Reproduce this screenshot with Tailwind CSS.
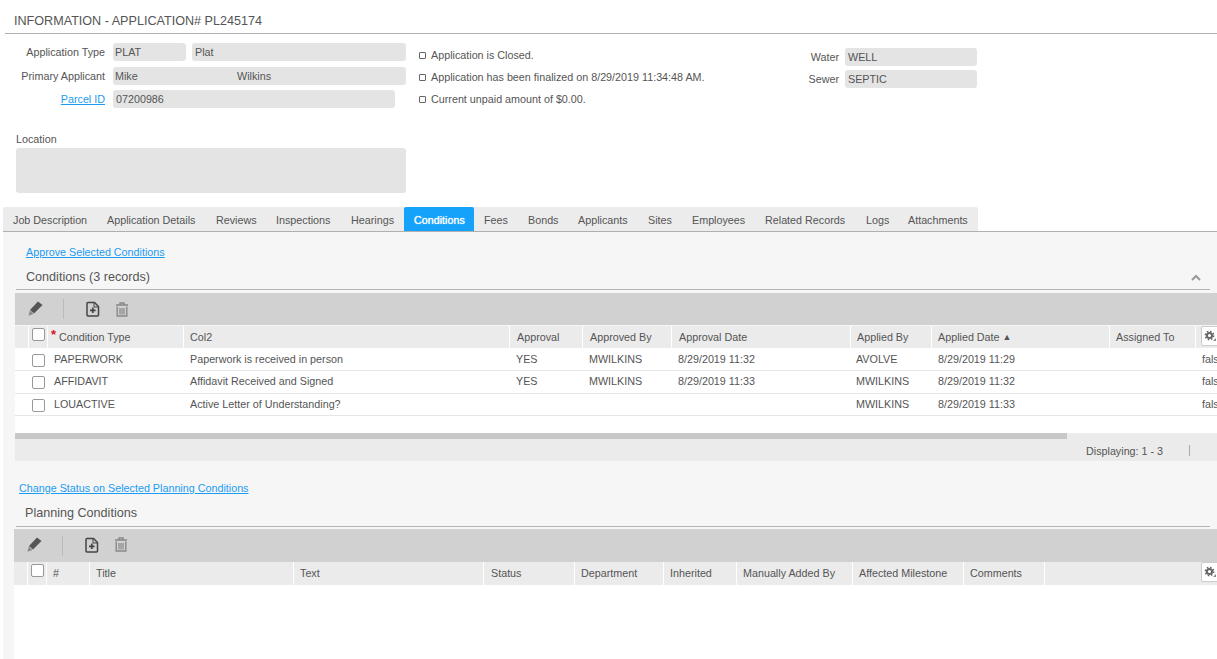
<!DOCTYPE html>
<html>
<head>
<meta charset="utf-8">
<script src="https://cdn.jsdelivr.net/npm/@tailwindcss/browser@4"></script>
</head>
<body class="bg-white h-[659px] w-[1217px] overflow-hidden font-['Liberation_Sans',Arial,sans-serif] text-[10.75px] text-[#555]">
<div class="h-[34px] ml-[5px] pl-[9px] pt-[14px] border-b border-[#b0b0b0] text-[12.6px] leading-[15px]">INFORMATION - APPLICATION# PL245174</div>

<div class="flex h-[173px]">
  <div class="w-[419px] shrink-0">
    <div class="flex mt-[9px] h-[18px] items-center">
      <div class="w-[105px] text-right">Application Type</div>
      <div class="ml-[8px] w-[73px] h-full bg-[#e4e4e4] rounded-[3px] pl-[2px] leading-[18px]">PLAT</div>
      <div class="ml-[6px] w-[214px] h-full bg-[#e4e4e4] rounded-[3px] pl-[3px] leading-[18px]">Plat</div>
    </div>
    <div class="flex mt-[6px] h-[18px] items-center">
      <div class="w-[105px] text-right">Primary Applicant</div>
      <div class="ml-[8px] w-[293px] h-full bg-[#e4e4e4] rounded-[3px] pl-[2px] leading-[18px] flex"><span class="w-[122px]">Mike</span><span>Wilkins</span></div>
    </div>
    <div class="flex mt-[5px] h-[18px] items-center">
      <a class="w-[105px] text-right text-[#1b9cf2] underline">Parcel ID</a>
      <div class="ml-[8px] w-[282px] h-full bg-[#e4e4e4] rounded-[3px] pl-[3px] leading-[18px]">07200986</div>
    </div>
    <div class="ml-[16px] mt-[25px] leading-[13px]">Location</div>
    <div class="ml-[16px] mt-[2px] w-[390px] h-[45px] bg-[#e4e4e4] rounded-[3px]"></div>
  </div>
  <div class="w-[374px] shrink-0 pt-[14px]">
    <div class="flex items-center h-[14px] gap-[5px]"><span class="w-[7px] h-[7px] border border-[#666] rounded-[1px]"></span><span>Application is Closed.</span></div>
    <div class="flex items-center h-[14px] gap-[5px] mt-[8px]"><span class="w-[7px] h-[7px] border border-[#666] rounded-[1px]"></span><span>Application has been finalized on 8/29/2019 11:34:48 AM.</span></div>
    <div class="flex items-center h-[14px] gap-[5px] mt-[8px]"><span class="w-[7px] h-[7px] border border-[#666] rounded-[1px]"></span><span>Current unpaid amount of $0.00.</span></div>
  </div>
  <div class="pt-[14px]">
    <div class="flex h-[18px] items-center">
      <div class="w-[46px] text-right">Water</div>
      <div class="ml-[6px] w-[132px] h-full bg-[#e4e4e4] rounded-[3px] pl-[3px] leading-[18px]">WELL</div>
    </div>
    <div class="flex h-[18px] items-center mt-[4px]">
      <div class="w-[46px] text-right">Sewer</div>
      <div class="ml-[6px] w-[132px] h-full bg-[#e4e4e4] rounded-[3px] pl-[3px] leading-[18px]">SEPTIC</div>
    </div>
  </div>
</div>

<div class="ml-[3px] flex h-[25px] border-b border-[#b0b0b0] leading-[26px] whitespace-nowrap">
  <div class="flex h-[24px] bg-[#ececec] rounded-t-[2px]">
    <div class="w-[94px] pl-[10px]">Job Description</div>
    <div class="w-[109px] pl-[10px]">Application Details</div>
    <div class="w-[60px] pl-[10px]">Reviews</div>
    <div class="w-[75px] pl-[10px]">Inspections</div>
    <div class="w-[63px] pl-[10px]">Hearings</div>
    <div class="w-[70px] pl-[10px] bg-[#14a2fb] text-white rounded-t-[2px] [text-shadow:0_0_1px_#fff]">Conditions</div>
    <div class="w-[44px] pl-[10px]">Fees</div>
    <div class="w-[50px] pl-[10px]">Bonds</div>
    <div class="w-[70px] pl-[10px]">Applicants</div>
    <div class="w-[44px] pl-[10px]">Sites</div>
    <div class="w-[73px] pl-[10px]">Employees</div>
    <div class="w-[101px] pl-[10px]">Related Records</div>
    <div class="w-[42px] pl-[10px]">Logs</div>
    <div class="w-[80px] pl-[10px]">Attachments</div>
  </div>
</div>

<div class="ml-[3px] h-[427px] bg-[#f6f6f6]">
  <div class="pl-[23px] pt-[14px] leading-[13px]"><a class="text-[#1b9cf2] underline">Approve Selected Conditions</a></div>
  <div class="ml-[13px] mr-[7px] mt-[7px] h-[24px] border-b border-[#b5b5b5] flex justify-between items-center pl-[10px] pr-[9px] text-[12.6px]">
    <span>Conditions (3 records)</span>
    <svg width="10" height="7" viewBox="0 0 10 7"><path d="M1 6 L5 2 L9 6" fill="none" stroke="#999" stroke-width="2"/></svg>
  </div>

  <div class="ml-[12px] mt-[3px] h-[32px] bg-[#d1d1d1] flex items-center">
    <svg class="ml-[13px] mb-[2px]" width="15" height="15" viewBox="0 0 15 15"><path d="M10 .5 L14.5 4 L6 12.5 L2 9 Z" fill="#555"/><path d="M1.8 9.6 L5.4 12.9 L.5 14.8 Z" fill="#8a8a8a"/></svg>
    <div class="ml-[20px] w-px h-[20px] bg-[#bbb]"></div>
    <svg class="ml-[22px]" width="14" height="16" viewBox="0 0 14 16"><path d="M2 1.5 H8.5 L12.5 5.5 V14 Q12.5 15 11.5 15 H2 Q1 15 1 14 V2.5 Q1 1.5 2 1.5 Z" fill="none" stroke="#444" stroke-width="1.5"/><path d="M8 2 V6 H12" fill="none" stroke="#444" stroke-width="1"/><path d="M6.8 6.5 V12 M4 9.3 H9.6" stroke="#444" stroke-width="1.7"/></svg>
    <svg class="ml-[15px]" width="14" height="15" viewBox="0 0 14 15"><path d="M1 3 H13 M5 2.5 V1 H9 V2.5" fill="none" stroke="#888" stroke-width="1.4"/><path d="M2.2 4.5 V14 H11.8 V4.5" fill="none" stroke="#888" stroke-width="1.4"/><path d="M5 6 V12.5 M7 6 V12.5 M9 6 V12.5" stroke="#888" stroke-width="1.2"/></svg>
  </div>

  <div class="ml-[12px] mt-px grid grid-cols-[13px_19px_136px_326px_73px_89px_179px_81px_178px_86px_22px] h-[22px] bg-[#ebebeb] leading-[23px] whitespace-nowrap">
    <div></div>
    <div class="border-l border-white pl-[3px] pt-[2px]"><div class="w-[13px] h-[13px] bg-white border border-[#999] rounded-[2px]"></div></div>
    <div class="border-l border-white pl-[3px] relative"><span class="absolute left-[3px] top-[-3px] text-[#d8121d] text-[13px] font-bold">*</span><span class="pl-[8px]">Condition Type</span></div>
    <div class="border-l border-white pl-[6px]">Col2</div>
    <div class="border-l border-white pl-[7px]">Approval</div>
    <div class="border-l border-white pl-[7px]">Approved By</div>
    <div class="border-l border-white pl-[7px]">Approval Date</div>
    <div class="border-l border-white pl-[6px]">Applied By</div>
    <div class="border-l border-white pl-[6px]">Applied Date <span class="text-[9px] align-[1px]">▲</span></div>
    <div class="border-l border-white pl-[6px]">Assigned To</div>
    <div class="border-l border-white pl-[5px]">
      <div class="w-[20px] h-[20px] bg-white border border-[#ccc] rounded-[2px] flex items-start pt-[3px] pl-[2px]">
        <svg width="13" height="12" viewBox="0 0 13 12"><circle cx="5.5" cy="5.5" r="2.6" fill="none" stroke="#666" stroke-width="2"/><circle cx="5.5" cy="5.5" r="4.2" fill="none" stroke="#666" stroke-width="1.4" stroke-dasharray="1.6 1.7"/><path d="M12 8 V11 H9 Z" fill="#888"/></svg>
      </div>
    </div>
  </div>

  <div class="ml-[12px] bg-white h-[85px]">
    <div class="grid grid-cols-[13px_19px_136px_326px_73px_89px_179px_81px_178px_86px_22px] h-[23px] border-b border-[#e6e6e6] leading-[22px] whitespace-nowrap">
      <div></div><div class="pl-[4px] pt-[6px]"><div class="w-[13px] h-[13px] border border-[#999] rounded-[2px]"></div></div>
      <div class="pl-[7px]">PAPERWORK</div><div class="pl-[7px]">Paperwork is received in person</div><div class="pl-[7px]">YES</div><div class="pl-[7px]">MWILKINS</div><div class="pl-[7px]">8/29/2019 11:32</div><div class="pl-[6px]">AVOLVE</div><div class="pl-[7px]">8/29/2019 11:29</div><div></div><div class="pl-[7px]">false</div>
    </div>
    <div class="grid grid-cols-[13px_19px_136px_326px_73px_89px_179px_81px_178px_86px_22px] h-[23px] border-b border-[#e6e6e6] leading-[21px] whitespace-nowrap">
      <div></div><div class="pl-[4px] pt-[5px]"><div class="w-[13px] h-[13px] border border-[#999] rounded-[2px]"></div></div>
      <div class="pl-[7px]">AFFIDAVIT</div><div class="pl-[7px]">Affidavit Received and Signed</div><div class="pl-[7px]">YES</div><div class="pl-[7px]">MWILKINS</div><div class="pl-[7px]">8/29/2019 11:33</div><div class="pl-[6px]">MWILKINS</div><div class="pl-[7px]">8/29/2019 11:32</div><div></div><div class="pl-[7px]">false</div>
    </div>
    <div class="grid grid-cols-[13px_19px_136px_326px_73px_89px_179px_81px_178px_86px_22px] h-[22px] border-b border-[#e6e6e6] leading-[21px] whitespace-nowrap">
      <div></div><div class="pl-[4px] pt-[5px]"><div class="w-[13px] h-[13px] border border-[#999] rounded-[2px]"></div></div>
      <div class="pl-[7px]">LOUACTIVE</div><div class="pl-[7px]">Active Letter of Understanding?</div><div></div><div></div><div></div><div class="pl-[6px]">MWILKINS</div><div class="pl-[7px]">8/29/2019 11:33</div><div></div><div class="pl-[7px]">false</div>
    </div>
  </div>

  <div class="ml-[12px] h-[6px] bg-[#ebebeb]"><div class="w-[1052px] h-full bg-[#c8c8c8]"></div></div>
  <div class="ml-[12px] h-[22px] bg-[#ebebeb] flex items-center pl-[1071px]">
    <span class="w-[103px] leading-[24px] pt-px">Displaying: 1 - 3</span><span class="w-px h-[11px] bg-[#aaa]"></span>
  </div>

  <div class="pl-[16px] mt-[21px] leading-[13px]"><a class="text-[#1b9cf2] underline">Change Status on Selected Planning Conditions</a></div>
  <div class="ml-[13px] mr-[7px] mt-[5px] h-[27px] border-b border-[#b5b5b5] flex items-center pl-[9px] text-[12.6px]">Planning Conditions</div>

  <div class="ml-[11px] mt-[2px] h-[33px] bg-[#d1d1d1] flex items-center">
    <svg class="ml-[13px] mb-[2px]" width="15" height="15" viewBox="0 0 15 15"><path d="M10 .5 L14.5 4 L6 12.5 L2 9 Z" fill="#555"/><path d="M1.8 9.6 L5.4 12.9 L.5 14.8 Z" fill="#8a8a8a"/></svg>
    <div class="ml-[20px] w-px h-[20px] bg-[#bbb]"></div>
    <svg class="ml-[22px] mb-[2px]" width="14" height="16" viewBox="0 0 14 16"><path d="M2 1.5 H8.5 L12.5 5.5 V14 Q12.5 15 11.5 15 H2 Q1 15 1 14 V2.5 Q1 1.5 2 1.5 Z" fill="none" stroke="#444" stroke-width="1.5"/><path d="M8 2 V6 H12" fill="none" stroke="#444" stroke-width="1"/><path d="M6.8 6.5 V12 M4 9.3 H9.6" stroke="#444" stroke-width="1.7"/></svg>
    <svg class="ml-[15px] mb-[2px]" width="14" height="15" viewBox="0 0 14 15"><path d="M1 3 H13 M5 2.5 V1 H9 V2.5" fill="none" stroke="#888" stroke-width="1.4"/><path d="M2.2 4.5 V14 H11.8 V4.5" fill="none" stroke="#888" stroke-width="1.4"/><path d="M5 6 V12.5 M7 6 V12.5 M9 6 V12.5" stroke="#888" stroke-width="1.2"/></svg>
  </div>

  <div class="ml-[11px] grid grid-cols-[13px_19px_43px_204px_190px_91px_89px_73px_116px_111px_81px_157px_16px] h-[23px] bg-[#ebebeb] leading-[23px] whitespace-nowrap">
    <div></div>
    <div class="border-l border-white pl-[3px] pt-[2px]"><div class="w-[13px] h-[13px] bg-white border border-[#999] rounded-[2px]"></div></div>
    <div class="border-l border-white pl-[6px]">#</div>
    <div class="border-l border-white pl-[6px]">Title</div>
    <div class="border-l border-white pl-[6px]">Text</div>
    <div class="border-l border-white pl-[7px]">Status</div>
    <div class="border-l border-white pl-[6px]">Department</div>
    <div class="border-l border-white pl-[6px]">Inherited</div>
    <div class="border-l border-white pl-[6px]">Manually Added By</div>
    <div class="border-l border-white pl-[6px]">Affected Milestone</div>
    <div class="border-l border-white pl-[6px]">Comments</div>
    <div class="border-l border-white"></div>
    <div>
      <div class="w-[20px] h-[20px] bg-white border border-[#ccc] rounded-[2px] flex items-start pt-[3px] pl-[2px]">
        <svg width="13" height="12" viewBox="0 0 13 12"><circle cx="5.5" cy="5.5" r="2.6" fill="none" stroke="#666" stroke-width="2"/><circle cx="5.5" cy="5.5" r="4.2" fill="none" stroke="#666" stroke-width="1.4" stroke-dasharray="1.6 1.7"/><path d="M12 8 V11 H9 Z" fill="#888"/></svg>
      </div>
    </div>
  </div>
  <div class="ml-[11px] h-[80px] bg-white"></div>
</div>
</body>
</html>
